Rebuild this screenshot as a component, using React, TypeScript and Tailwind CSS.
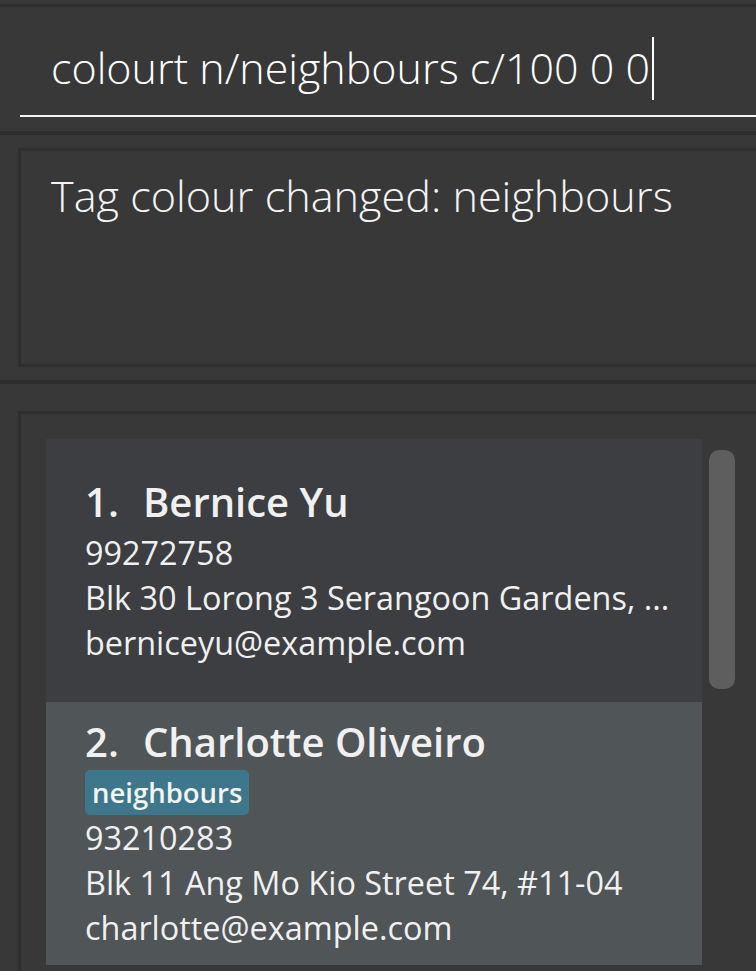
import React from "react";

const font = { fontFamily: '"Open Sans", "Liberation Sans", sans-serif' };

function Card({
  idx,
  name,
  tags,
  phone,
  address,
  email,
  selected,
}: {
  idx: number;
  name: string;
  tags: string[];
  phone: string;
  address: string;
  email: string;
  selected?: boolean;
}) {
  return (
    <div
      className={`h-[263px] flex flex-col justify-center pl-[39px] pr-4 text-[#f0f0f0] ${
        selected ? "bg-[#505558]" : "bg-[#3c3e41]"
      }`}
    >
      <div className="flex text-[40px] leading-[50px] font-semibold whitespace-nowrap">
        <span className="w-[58px]">{idx}.</span>
        <span>{name}</span>
      </div>
      <div className="flex gap-2 mt-[3px]">
        {tags.map((t) => (
          <span
            key={t}
            className="h-[45px] px-[7px] rounded-[5px] bg-[#3e778b] text-[27.5px] leading-[45px] font-semibold text-[#f4f4f4]"
          >
            {t}
          </span>
        ))}
      </div>
      <div className="text-[32.4px] leading-[45px] font-normal whitespace-nowrap">{phone}</div>
      <div className="text-[32.4px] leading-[45px] font-normal whitespace-nowrap">{address}</div>
      <div className="text-[32.4px] leading-[45px] font-normal whitespace-nowrap">{email}</div>
    </div>
  );
}

export default function App() {
  return (
    <div className="w-[756px] h-[971px] overflow-hidden bg-[#383838] flex flex-col" style={font}>
      <div className="h-[4px]" />
      <div className="h-[3px] bg-[#2d2d2d]" />
      {/* command box */}
      <div className="h-[124px] flex flex-col">
        <div className="flex-1 flex items-start pl-[51px] pt-[30px]">
          <span className="mt-[6px] text-[43px] font-light text-white leading-[50px] whitespace-nowrap">
            colourt n/neighbours c/100 0 0
          </span>
          <span className="w-[2px] h-[63px] bg-white ml-[2px]" />
        </div>
        <div className="h-[2px] bg-[#f4f4f4] ml-[20px] mb-[14px]" />
      </div>
      <div className="h-[4px] bg-[#2d2d2d]" />
      {/* result */}
      <div className="pt-[13px] pb-[13px] pl-[18px]">
        <div className="h-[219px] border-[3px] border-r-0 border-[#2e2e2e] pl-[30px] pt-[20px]">
          <div className="text-[43.2px] font-light text-[#f4f4f4] leading-[50px] whitespace-nowrap">
            Tag colour changed: neighbours
          </div>
        </div>
      </div>
      <div className="h-[4px] bg-[#2d2d2d]" />
      {/* list */}
      <div className="flex-1 pt-[27px] pl-[18px]">
        <div className="relative h-full border-l-[3px] border-t-[3px] border-[#2e2e2e] pl-[25px] pt-[25px]">
          <div className="w-[656px] flex flex-col">
            <Card
              idx={1}
              name="Bernice Yu"
              tags={[]}
              phone="99272758"
              address="Blk 30 Lorong 3 Serangoon Gardens, ..."
              email="berniceyu@example.com"
            />
            <Card
              idx={2}
              name="Charlotte Oliveiro"
              tags={["neighbours"]}
              phone="93210283"
              address="Blk 11 Ang Mo Kio Street 74, #11-04"
              email="charlotte@example.com"
              selected
            />
          </div>
          <div className="absolute left-[688px] top-[36px] w-[26px] h-[239px] rounded-[10px] bg-[#5e5e5e]" />
        </div>
      </div>
    </div>
  );
}
